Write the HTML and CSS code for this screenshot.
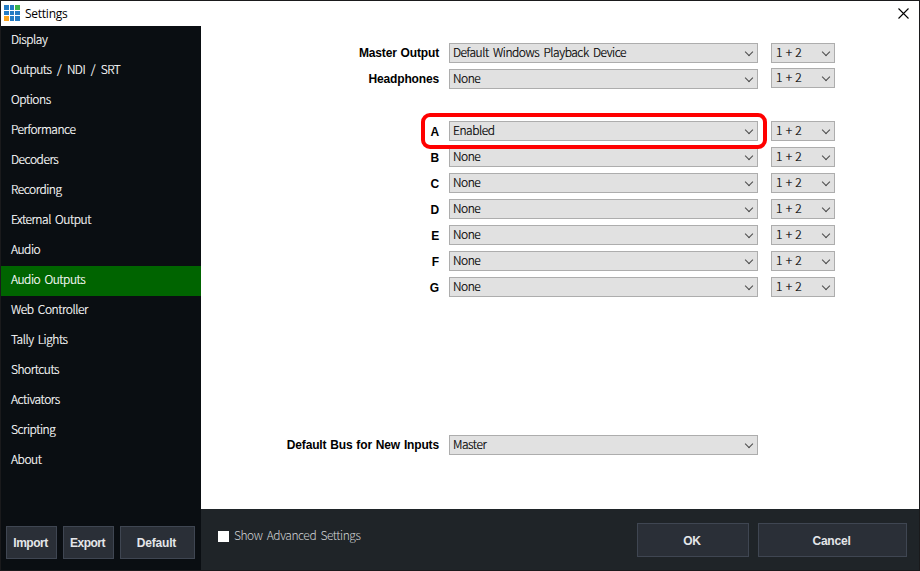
FILE: index.html
```html
<!DOCTYPE html>
<html lang="en">
<head>
<meta charset="utf-8">
<title>Settings</title>
<link rel="stylesheet" href="styles.css">
</head>
<body>
<div class="window">
  <header class="titlebar">
    <svg class="logo" width="16" height="16" viewBox="0 0 16 16" shape-rendering="crispEdges">
      <path fill="#237bc4" d="M0 0h5v5H0zM6 0h4v5H6zM0 6h5v4H0zM6 6h4v4H6zM11 6h5v4h-5zM6 11h4v5H6zM11 11h5v5h-5z"/>
      <path fill="#3cb44a" d="M11 0h5v5h-5z"/>
      <path fill="#faa21b" d="M0 11h5v5H0z"/>
    </svg>
    <span class="title">Settings</span>
    <svg class="close" width="11" height="11" viewBox="0 0 11 11"><path d="M.5 .5l10 10M10.500 .5l-10 10" stroke="#000" stroke-width="1.100"/></svg>
  </header>
  <div class="body">
    <aside class="sidebar">
      <nav class="nav">
        <a class="item">Display</a>
        <a class="item wide">Outputs / NDI / SRT</a>
        <a class="item">Options</a>
        <a class="item">Performance</a>
        <a class="item">Decoders</a>
        <a class="item">Recording</a>
        <a class="item">External Output</a>
        <a class="item">Audio</a>
        <a class="item active">Audio Outputs</a>
        <a class="item">Web Controller</a>
        <a class="item">Tally Lights</a>
        <a class="item">Shortcuts</a>
        <a class="item">Activators</a>
        <a class="item">Scripting</a>
        <a class="item">About</a>
      </nav>
      <div class="tools">
        <button class="btn small">Import</button>
        <button class="btn small">Export</button>
        <button class="btn medium">Default</button>
      </div>
    </aside>
    <main class="main">
      <div class="form">
        <div class="row"><label>Master Output</label><div class="select">Default Windows Playback Device<i class="chev"></i></div><div class="select pair">1 + 2<i class="chev"></i></div></div>
        <div class="row headphones"><label>Headphones</label><div class="select">None<i class="chev"></i></div><div class="select pair">1 + 2<i class="chev"></i></div></div>
        <div class="row first-bus"><label>A</label><div class="select">Enabled<i class="chev"></i></div><div class="select pair">1 + 2<i class="chev"></i></div><div class="highlight"></div></div>
        <div class="row"><label>B</label><div class="select">None<i class="chev"></i></div><div class="select pair">1 + 2<i class="chev"></i></div></div>
        <div class="row"><label>C</label><div class="select">None<i class="chev"></i></div><div class="select pair">1 + 2<i class="chev"></i></div></div>
        <div class="row"><label>D</label><div class="select">None<i class="chev"></i></div><div class="select pair">1 + 2<i class="chev"></i></div></div>
        <div class="row"><label>E</label><div class="select">None<i class="chev"></i></div><div class="select pair">1 + 2<i class="chev"></i></div></div>
        <div class="row"><label>F</label><div class="select">None<i class="chev"></i></div><div class="select pair">1 + 2<i class="chev"></i></div></div>
        <div class="row"><label>G</label><div class="select">None<i class="chev"></i></div><div class="select pair">1 + 2<i class="chev"></i></div></div>
        <div class="row default-bus"><label>Default Bus for New Inputs</label><div class="select">Master<i class="chev"></i></div></div>
      </div>
      <footer class="footer">
        <span class="check"></span>
        <span class="check-label">Show Advanced Settings</span>
        <button class="btn ok">OK</button>
        <button class="btn cancel">Cancel</button>
      </footer>
    </main>
  </div>
</div>
</body>
</html>
```
FILE: styles.css
```css
* { box-sizing: border-box; }
body { margin: 0; font: 300 12px/18px "Noto Sans CJK JP", sans-serif; letter-spacing: -.45px; word-spacing: 2px; }
.item, .select { -webkit-text-stroke: .2px currentColor; }
.window {
  width: 920px;
  height: 571px;
  border: 1px solid #1a1a1c;
  background: #fff;
  display: flex;
  flex-direction: column;
}
.titlebar { height: 25px; flex: none; display: flex; align-items: center; padding: 0 10px 0 3px; }
.logo { margin-top: -1px; }
.title { font: 12px/16px "Open Sans", sans-serif; margin: 0 0 0 5px; flex: 1; letter-spacing: -.25px; }
.close { margin-top: -1px; }
.body { flex: 1; display: flex; min-height: 0; }
.sidebar { width: 200px; background: #0a0e12; display: flex; flex-direction: column; justify-content: space-between; }
.nav { display: flex; flex-direction: column; }
.item { height: 30px; line-height: 26px; padding-left: 10px; color: #fff; white-space: pre; }
.wide { word-spacing: 3.500px; letter-spacing: -.5px; }
.active { background: #006400; }
.tools { display: flex; gap: 6px; padding: 0 0 11px 5px; }
.btn {
  height: 33px;
  padding: 2px 2px 0 0;
  border: 1px solid #3f4652;
  background: #2a2f37;
  color: #e4e6e9;
  font: bold 12px/29px "Liberation Sans", sans-serif;
  letter-spacing: -.2px;
}
.small { width: 51px; letter-spacing: -.5px; }
.medium { width: 75px; }
.main { flex: 1; display: flex; flex-direction: column; }
.form { flex: 1; padding-top: 17px; display: flex; flex-direction: column; gap: 6px; }
.row { display: flex; height: 20px; position: relative; }
.row label { width: 238px; margin-right: 10px; text-align: right; font: bold 12px/20px "Liberation Sans", sans-serif; color: #000; letter-spacing: -.15px; word-spacing: .7px; }
.select {
  width: 309px;
  height: 20px;
  border: 1px solid #adadad;
  background: #e1e1e1;
  color: #000;
  line-height: 16px;
  padding: 0 5px 0 3px;
  display: flex;
  justify-content: space-between;
  white-space: pre;
}
.pair { width: 64px; margin-left: 13px; padding: 0 5px 0 4px; letter-spacing: -.7px; }
.headphones .pair { margin-top: -1px; }
.chev { width: 6px; height: 6px; border: solid #4a4a4a; border-width: 0 1.200px 1.200px 0; transform: rotate(45deg); margin: 5px 0 0; }
.first-bus { margin-top: 26px; z-index: 1; }
.first-bus label, .first-bus ~ .row:not(.default-bus) label { padding-top: 1px; }
.default-bus { margin-top: 132px; }
.highlight { position: absolute; left: 220px; top: -8px; width: 346px; height: 36px; border: 4px solid #f00; border-radius: 9px; }
.footer { height: 61px; background: #1f2428; display: flex; align-items: flex-start; padding: 14px 12px 0 17px; }
.check { width: 11px; height: 11px; background: #fff; margin-top: 8px; }
.check-label { margin: 3px 0 0 5px; color: #d2d4d6; flex: 1; }
.ok { width: 112px; height: 34px; margin-right: 9px; }
.cancel { width: 149px; height: 34px; }
```
